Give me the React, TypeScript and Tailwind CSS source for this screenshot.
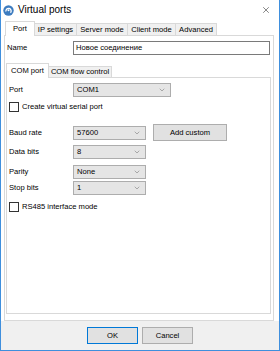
import { ChevronDown, X } from 'lucide-react'

const txt = 'text-[7.6px] leading-none text-black'

function Select({ value, width }: { value: string; width: string }) {
  return (
    <div
      className={`flex h-[14px] ${width} items-center justify-between border border-[#adadad] bg-[#e5e5e5] pl-[3px] pr-[4px]`}
    >
      <span className={txt}>{value}</span>
      <ChevronDown size={8} strokeWidth={1.6} className="text-[#707070]" />
    </div>
  )
}

function Checkbox({ label }: { label: string }) {
  return (
    <div className="flex items-center gap-[3px] pl-[2px]">
      <div className="h-[10px] w-[10px] border border-[#333] bg-white" />
      <span className={txt}>{label}</span>
    </div>
  )
}

function Row({ label, children }: { label: string; children: React.ReactNode }) {
  return (
    <div className="flex items-center pl-[2px]">
      <span className={`w-[64px] ${txt}`}>{label}</span>
      {children}
    </div>
  )
}

export default function App() {
  const tabs = [
    { label: 'Port', w: 'w-[30px]' },
    { label: 'IP settings', w: 'w-[42px]' },
    { label: 'Server mode', w: 'w-[51px]' },
    { label: 'Client mode', w: 'w-[48px]' },
    { label: 'Advanced', w: 'w-[41px]' },
  ]
  return (
    <div
      className="flex h-[351px] w-[280px] flex-col border-x border-b border-[#3f8fdd] bg-white text-black"
      style={{ fontFamily: '"Liberation Sans", Arial, sans-serif' }}
    >
      {/* Title bar */}
      <div className="flex h-[20px] shrink-0 items-center pl-[2px] pr-[8px]">
        <svg width="11" height="11" viewBox="0 0 11 11">
          <circle cx="5.5" cy="5.5" r="5.2" fill="#3d7cc0" />
          <path d="M3 6.5a2.6 2.6 0 1 1 4.5 1.2" stroke="white" strokeWidth="1.3" fill="none" />
          <circle cx="5.5" cy="5.2" r="1" fill="white" />
        </svg>
        <span className="ml-[4px] text-[10px] leading-none">Virtual ports</span>
        <X size={10} strokeWidth={1.3} className="ml-auto text-[#222]" />
      </div>

      {/* Outer tabs */}
      <div className="flex h-[15px] shrink-0 items-end pl-[4px]">
        {tabs.map((t, i) => (
          <div
            key={t.label}
            className={
              i === 0
                ? `relative z-10 -mb-px flex h-[15px] ${t.w} items-center justify-center border border-b-0 border-[#d9d9d9] bg-white pb-[1px] ${txt}`
                : `flex h-[12px] ${t.w} items-center justify-center border border-b-0 border-l-0 border-[#d9d9d9] bg-[#f0f0f0] ${txt}`
            }
          >
            {t.label}
          </div>
        ))}
      </div>

      {/* Outer panel */}
      <div className="ml-[3px] flex h-[286px] w-[270px] shrink-0 flex-col border border-[#d9d9d9] bg-white">
        <div className="mt-[5px] flex items-center pl-[2px]">
          <span className={`w-[66px] ${txt}`}>Name</span>
          <div className={`flex h-[14px] w-[197px] items-center border border-[#7a7a7a] bg-white pl-[2px] ${txt}`}>
            Новое соединение
          </div>
        </div>

        {/* Inner tabs */}
        <div className="ml-[1px] mt-[8px] flex h-[14px] items-end">
          <div className={`relative z-10 -mb-px flex h-[15px] w-[43px] items-center justify-center border border-b-0 border-[#d9d9d9] bg-white pb-[1px] ${txt}`}>
            COM port
          </div>
          <div className={`flex h-[11px] w-[63px] items-center justify-center border border-b-0 border-l-0 border-[#d9d9d9] bg-[#f0f0f0] ${txt}`}>
            COM flow control
          </div>
        </div>

        <div className="ml-[1px] flex h-[237px] w-[265px] flex-col border border-[#d9d9d9] bg-white">
          <div className="mt-[5px]">
            <Row label="Port">
              <Select value="COM1" width="w-[98px]" />
            </Row>
          </div>
          <div className="mt-[5px]">
            <Checkbox label="Create virtual serial port" />
          </div>
          <div className="mt-[12px] flex h-[17px] items-center pl-[2px]">
            <span className={`w-[64px] ${txt}`}>Baud rate</span>
            <Select value="57600" width="w-[73px]" />
            <div className={`ml-[7px] flex h-[17px] w-[74px] items-center justify-center border border-[#adadad] bg-[#e1e1e1] ${txt}`}>
              Add custom
            </div>
          </div>
          <div className="mt-[4px]">
            <Row label="Data bits">
              <Select value="8" width="w-[73px]" />
            </Row>
          </div>
          <div className="mt-[6px]">
            <Row label="Parity">
              <Select value="None" width="w-[73px]" />
            </Row>
          </div>
          <div className="mt-[2px]">
            <Row label="Stop bits">
              <Select value="1" width="w-[73px]" />
            </Row>
          </div>
          <div className="mt-[7px]">
            <Checkbox label="RS485 interface mode" />
          </div>
        </div>
      </div>

      {/* Footer */}
      <div className="flex flex-1 items-center justify-center gap-[4px] bg-[#f0f0f0]">
        <div className={`flex h-[17px] w-[51px] items-center justify-center border border-[#0078d7] bg-[#e1e1e1] ${txt}`}>
          OK
        </div>
        <div className={`flex h-[17px] w-[51px] items-center justify-center border border-[#adadad] bg-[#e1e1e1] ${txt}`}>
          Cancel
        </div>
      </div>
    </div>
  )
}
